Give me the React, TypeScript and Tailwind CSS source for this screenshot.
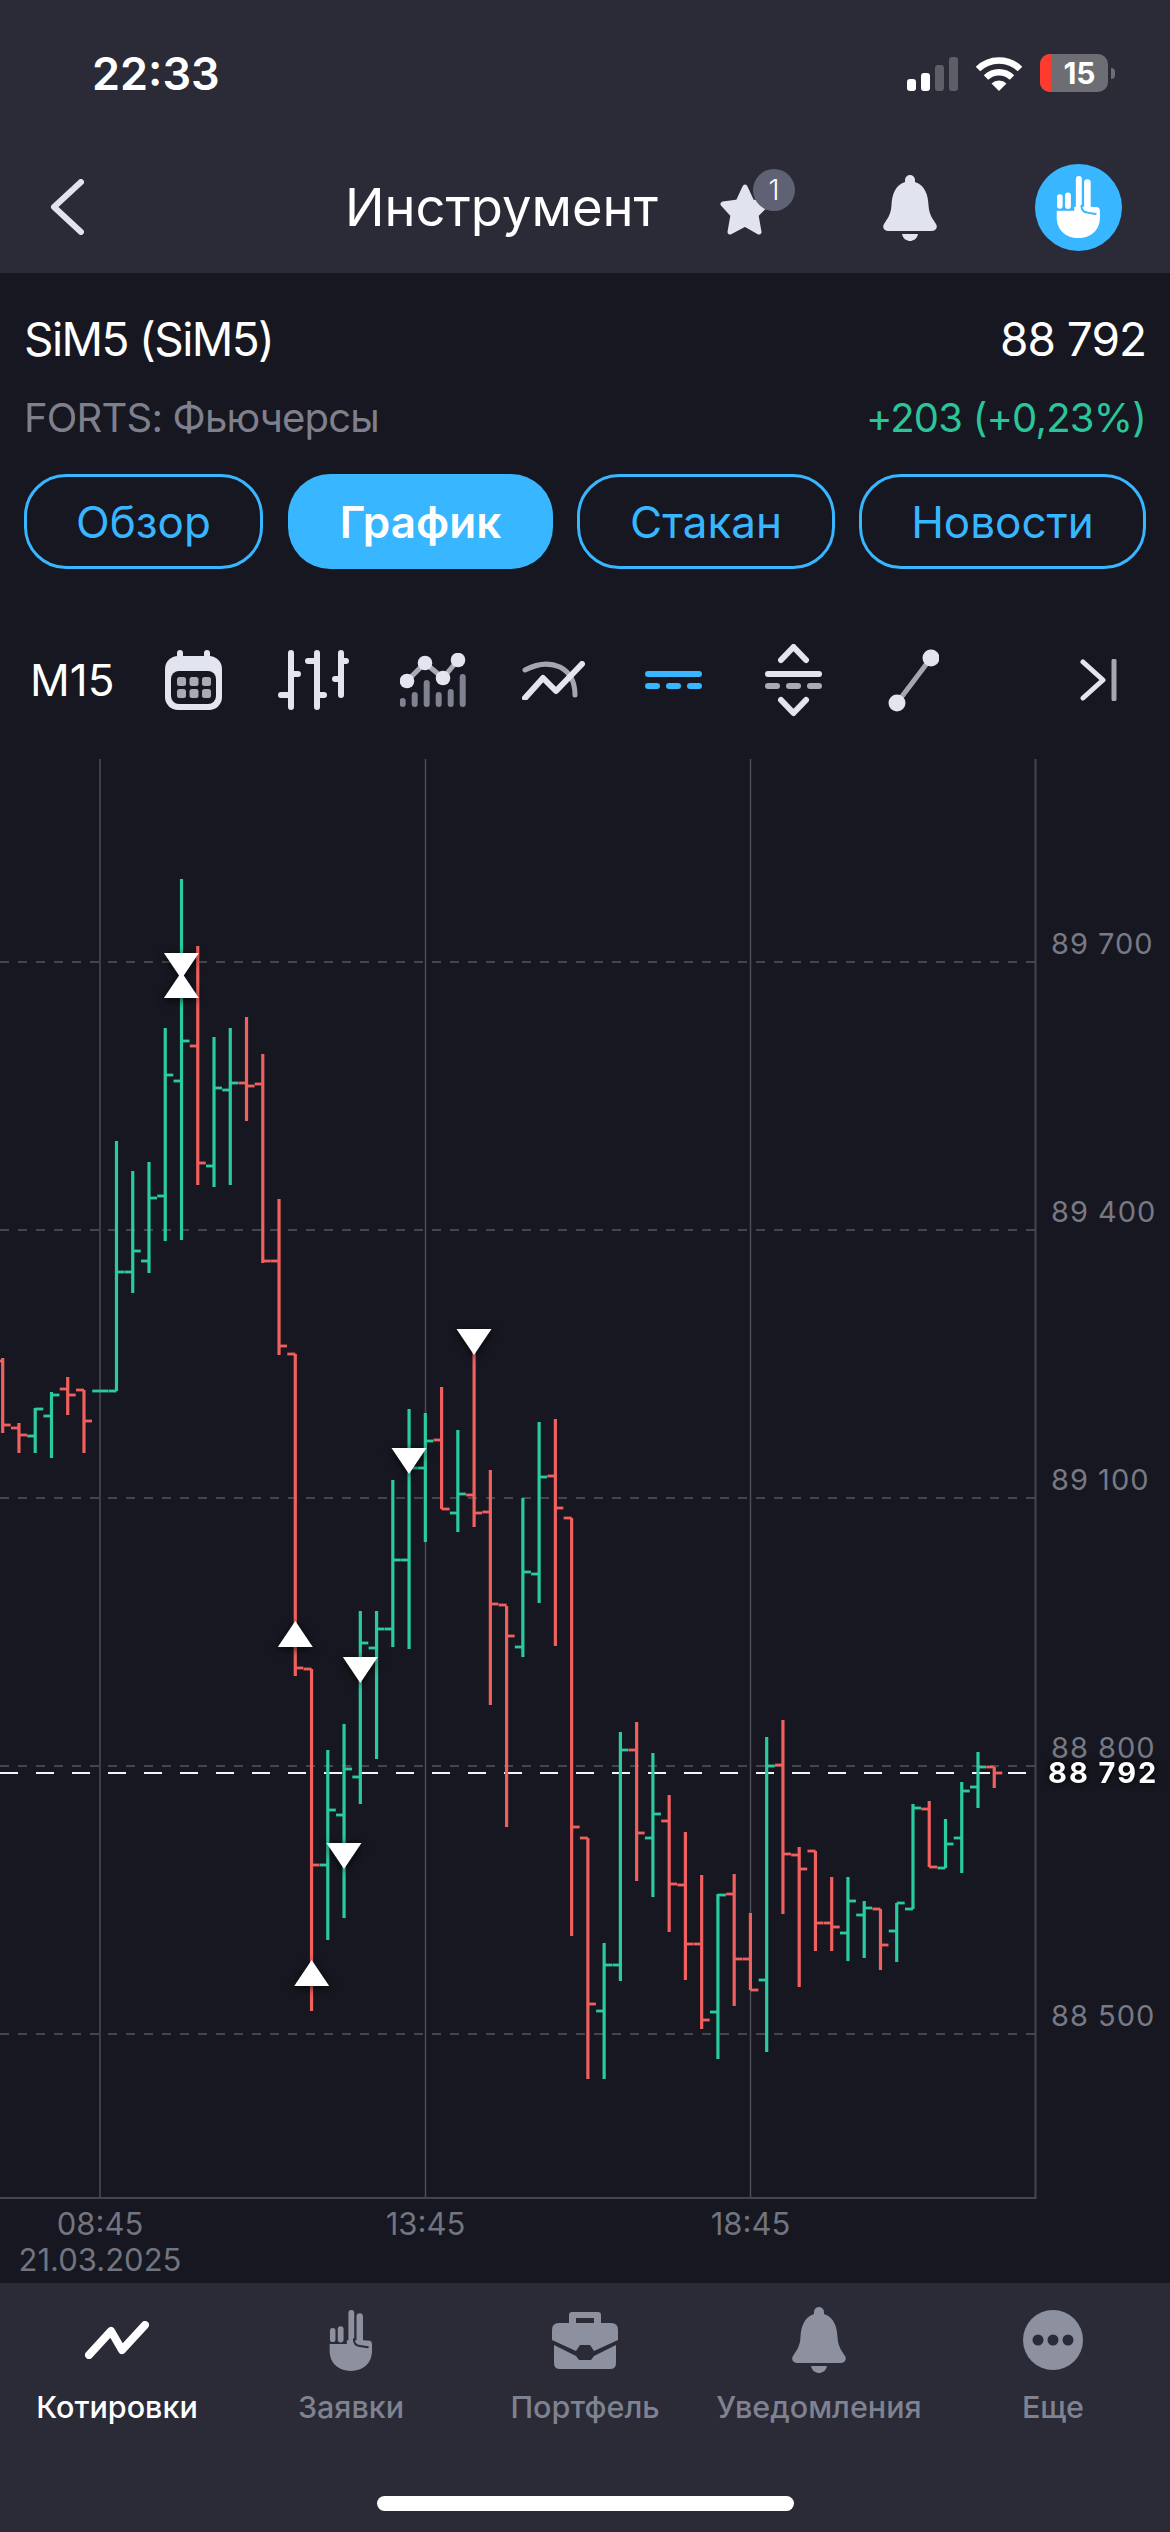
const BARS: [number, number, number, number][] = [
  // high, low, open, close in page pixels
  [1358, 1433, 1361, 1425], [1423, 1453, 1428, 1435], [1408, 1453, 1436, 1409], [1392, 1458, 1416, 1395],
  [1377, 1415, 1389, 1395], [1390, 1453, 1390, 1421], [1391, 1391, 1391, 1391], [1141, 1391, 1391, 1272],
  [1171, 1293, 1272, 1251], [1162, 1273, 1261, 1198], [1028, 1241, 1196, 1075], [879, 1240, 1081, 1041],
  [946, 1185, 1046, 1163], [1037, 1187, 1166, 1088], [1028, 1185, 1090, 1083], [1017, 1121, 1083, 1086],
  [1054, 1263, 1084, 1261], [1199, 1355, 1261, 1346], [1354, 1676, 1354, 1668], [1669, 2011, 1669, 1865],
  [1750, 1940, 1865, 1810], [1724, 1918, 1815, 1769], [1611, 1804, 1777, 1643], [1611, 1759, 1648, 1629],
  [1480, 1647, 1629, 1560], [1409, 1649, 1560, 1468], [1413, 1542, 1468, 1441], [1387, 1509, 1440, 1509],
  [1430, 1532, 1513, 1494], [1329, 1527, 1495, 1513], [1470, 1705, 1512, 1604], [1606, 1827, 1605, 1636],
  [1498, 1657, 1647, 1572], [1422, 1603, 1574, 1477], [1419, 1646, 1476, 1508], [1518, 1936, 1518, 1827],
  [1838, 2079, 1838, 2004], [1943, 2079, 2011, 1965], [1732, 1981, 1965, 1750], [1722, 1881, 1750, 1833],
  [1753, 1897, 1838, 1814], [1795, 1932, 1821, 1884], [1832, 1980, 1885, 1944], [1875, 2029, 1944, 2020],
  [1894, 2059, 2012, 1895], [1874, 2006, 1894, 1959], [1913, 1990, 1959, 1990], [1737, 2052, 1980, 1766],
  [1720, 1914, 1765, 1854], [1847, 1987, 1855, 1869], [1851, 1951, 1851, 1923], [1877, 1951, 1923, 1927],
  [1877, 1961, 1933, 1901], [1901, 1958, 1915, 1908], [1909, 1970, 1909, 1945], [1903, 1962, 1931, 1903],
  [1804, 1909, 1909, 1808], [1801, 1867, 1809, 1867], [1819, 1868, 1868, 1844], [1782, 1873, 1838, 1791],
  [1752, 1808, 1787, 1767], [1767, 1788, 1767, 1773],
];

const GRID = [
  { y: 962, label: "89 700" },
  { y: 1230, label: "89 400" },
  { y: 1498, label: "89 100" },
  { y: 1766, label: "88 800" },
  { y: 2034, label: "88 500" },
];

const TIMES = [
  { x: 100, label: "08:45" },
  { x: 425.5, label: "13:45" },
  { x: 750.5, label: "18:45" },
];

const DOWN_MARKS = [
  { x: 181.4, y: 953 },
  { x: 360.3, y: 1657 },
  { x: 344, y: 1843 },
  { x: 409, y: 1448 },
  { x: 474, y: 1329 },
];

const UP_MARKS = [
  { x: 181.4, y: 972 },
  { x: 295.3, y: 1621 },
  { x: 311.7, y: 1960 },
];

function Chart() {
  return (
    <svg width="1170" height="1543" viewBox="0 740 1170 1543" className="block [font-family:Inter,sans-serif]">
      {TIMES.map((t) => (
        <line key={t.x} x1={t.x} x2={t.x} y1="759" y2="2198" stroke="#4c4d56" strokeWidth="1.5" />
      ))}
      {GRID.map((g) => (
        <line key={g.y} x1="0" x2="1035" y1={g.y} y2={g.y} stroke="#55565e" strokeWidth="1.5" strokeDasharray="9 9" />
      ))}
      <line x1="1035.5" x2="1035.5" y1="759" y2="2199" stroke="#44454e" strokeWidth="2" />
      <line x1="0" x2="1036" y1="2198" y2="2198" stroke="#44454e" strokeWidth="2" />
      <line x1="0" x2="1026" y1="1773" y2="1773" stroke="#f4f4f6" strokeWidth="2" strokeDasharray="18 18" />

      {BARS.map(([high, low, open, close], i) => {
        const x = 2.7 + i * 16.255;
        const color = close <= open ? "#2bcba0" : "#f0605f";
        return (
          <g key={i} stroke={color} strokeWidth="3.2">
            <line x1={x} x2={x} y1={high} y2={low} />
            <line x1={x - 8} x2={x} y1={open} y2={open} strokeWidth="2.8" />
            <line x1={x} x2={x + 8} y1={close} y2={close} strokeWidth="2.8" />
          </g>
        );
      })}

      <g fill="#ffffff" className="drop-shadow-[0_2px_4px_rgba(0,0,0,0.7)]">
        {DOWN_MARKS.map((m) => (
          <polygon key={m.y} points={`${m.x - 17.5},${m.y} ${m.x + 17.5},${m.y} ${m.x},${m.y + 26}`} />
        ))}
        {UP_MARKS.map((m) => (
          <polygon key={m.y} points={`${m.x - 17.5},${m.y + 26} ${m.x + 17.5},${m.y + 26} ${m.x},${m.y}`} />
        ))}
      </g>

      {GRID.map((g) => (
        <text key={g.y} x="1051" y={g.y - 8} fontSize="29" letterSpacing="1" fill="#777985">
          {g.label}
        </text>
      ))}
      <text
        x="1048"
        y="1783"
        fontSize="29"
        fontWeight="700"
        letterSpacing="2"
        fill="#ffffff"
        className="drop-shadow-[0_0_3px_rgba(0,0,0,0.9)]"
      >
        88 792
      </text>

      {TIMES.map((t) => (
        <text key={t.x} x={t.x} y="2235" fontSize="31" textAnchor="middle" fill="#72747f">
          {t.label}
        </text>
      ))}
      <text x="100" y="2271" fontSize="31" textAnchor="middle" fill="#72747f">
        21.03.2025
      </text>
    </svg>
  );
}

function HandIcon({ color, gap, className }: { color: string; gap: string; className: string }) {
  return (
    <svg viewBox="1095 72 136 194" className={className}>
      <g fill={color}>
        <rect x="1155" y="75" width="18" height="110" rx="9" />
        <rect x="1180" y="85" width="20" height="95" rx="10" />
        <rect x="1098" y="130" width="17" height="44" rx="8" />
        <rect x="1122" y="125" width="18" height="50" rx="9" />
        <path d="M1097 180 H1150 V168 H1200 L1222 170 Q1228 172 1228 182 V200 C1228 240 1200 263 1163 263 C1125 263 1097 240 1097 200 Z" />
      </g>
      <path d="M1172 165 Q1172 184 1190 186 L1215 190" fill="none" stroke={gap} strokeWidth="6" strokeLinecap="round" />
    </svg>
  );
}

function BellIcon({ color, className }: { color: string; className: string }) {
  return (
    <svg viewBox="-1 0 56 66" className={className} fill={color}>
      <path d="M27 0 a5 5 0 0 1 5 5 v2 C42 10 45 20 45.5 30 C46 40 50 44 53 49 C55 52 53 56 49 56 H5 C1 56 -1 52 1 49 C4 44 8 40 8.5 30 C9 20 12 10 22 7 V5 a5 5 0 0 1 5 -5 Z" />
      <path d="M19 59 H35 C34 64 30 66 27 66 C24 66 20 64 19 59 Z" />
    </svg>
  );
}

function StatusBar() {
  return (
    <div className="flex h-[146px] items-center justify-between pl-[92px] pr-[55px]">
      <span className="text-[45px] font-semibold leading-none text-white">22:33</span>
      <div className="flex items-center">
        <svg width="51" height="34" viewBox="0 0 51 34" className="mt-[1px]">
          <rect x="0" y="22" width="9" height="12" rx="3" fill="#fff" />
          <rect x="14" y="16" width="9" height="18" rx="3" fill="#fff" />
          <rect x="28" y="8" width="9" height="26" rx="3" fill="#5d5e67" />
          <rect x="42" y="0" width="9" height="34" rx="3" fill="#5d5e67" />
        </svg>
        <svg width="48" height="36" viewBox="0 0 48 36" className="ml-[17px] mr-[17px]">
          <g fill="none" stroke="#fff" strokeWidth="6.5">
            <path d="M3 14 A30 30 0 0 1 45 14" />
            <path d="M11 22.5 A19 19 0 0 1 37 22.5" />
          </g>
          <path d="M24 36 L16.5 28.5 A11 11 0 0 1 31.5 28.5 Z" fill="#fff" />
        </svg>
        <div className="relative flex h-[38px] w-[68px] items-center overflow-hidden rounded-[10px] bg-[#6d6d74]">
          <div className="h-full w-[11px] bg-[#ff3b30]" />
          <span className="flex-1 text-center text-[30px] font-bold leading-none text-white">15</span>
        </div>
        <div className="ml-[3px] h-[11px] w-[4px] rounded-r-full bg-[#6d6d74]" />
      </div>
    </div>
  );
}

function NavBar() {
  return (
    <div className="flex h-[122px] items-center">
      <svg width="34" height="56" viewBox="0 0 34 56" className="ml-[50px]" fill="none" stroke="#e1e3ee" strokeWidth="6" strokeLinecap="round" strokeLinejoin="round">
        <polyline points="31,3 4,28 31,53" />
      </svg>
      <span className="ml-[261px] w-[315px] whitespace-nowrap text-[52.5px] font-normal leading-none text-white">Инструмент</span>
      <div className="relative ml-[60px] h-[60px] w-[48px]">
        <svg width="50" height="54" viewBox="0 0 50 54" className="absolute left-0 top-[6px]" fill="#e1e3ee" stroke="#e1e3ee" strokeWidth="5" strokeLinejoin="round">
          <polygon points="25,4 32,19 47,21 36,32 39,49 25,41 10,49 13,32 3,21 18,19" />
        </svg>
        <div className="absolute left-[33px] top-[-8px] flex h-[42px] w-[42px] items-center justify-center rounded-full bg-[#5f6275] text-[28px] font-light leading-none text-white">
          1
        </div>
      </div>
      <BellIcon color="#e1e3ee" className="ml-[114px] mt-[1px] h-[66px] w-[56px]" />
      <div className="ml-[97px] flex h-[87px] w-[87px] items-center justify-center rounded-full bg-[#38b6ff]">
        <HandIcon color="#ffffff" gap="#38b6ff" className="h-[64px] w-[45px]" />
      </div>
    </div>
  );
}

function Info() {
  return (
    <div className="pl-[24px] pr-[24px]">
      <div className="mt-[36px] flex h-[60px] items-center justify-between text-[46px] leading-none text-white">
        <span className="tracking-[-1.6px]">SiM5 (SiM5)</span>
        <span className="tracking-[-1px]">88 792</span>
      </div>
      <div className="mt-[19px] flex h-[60px] items-center justify-between text-[40px] leading-none">
        <span className="tracking-[-0.8px] text-[#7f808c]">FORTS: Фьючерсы</span>
        <span className="tracking-[-0.8px] text-[#2bc59b]">+203 (+0,23%)</span>
      </div>
      <div className="mt-[26px] flex h-[95px] gap-[24px] text-[44px] leading-none text-[#38b6ff]">
        <div className="flex w-[239px] items-center justify-center rounded-[42px] border-[3px] border-[#38b6ff]">Обзор</div>
        <div className="ml-[1px] flex w-[265px] items-center justify-center rounded-[42px] bg-[#38b6ff] font-semibold text-white">График</div>
        <div className="flex w-[258px] items-center justify-center rounded-[42px] border-[3px] border-[#38b6ff]">Стакан</div>
        <div className="flex w-[287px] items-center justify-center rounded-[42px] border-[3px] border-[#38b6ff]">Новости</div>
      </div>
    </div>
  );
}

function ToolCell({ children }: { children: React.ReactNode }) {
  return <div className="flex w-[120px] items-center justify-center">{children}</div>;
}

function Toolbar() {
  const light = "#e2e4ef";
  const grey = "#a8aab4";
  const dark = "#161720";
  return (
    <div className="mt-[51px] flex h-[120px] items-center pl-[30px] pr-[53px]">
      <span className="w-[103px] text-[44px] leading-none text-white">M15</span>
      <ToolCell>
        <svg width="57" height="60" viewBox="0 0 57 60">
          <rect x="12" y="0" width="6" height="12" rx="3" fill={light} />
          <rect x="39" y="0" width="6" height="12" rx="3" fill={light} />
          <rect x="0" y="6" width="57" height="54" rx="13" fill={light} />
          <rect x="6" y="21" width="45" height="33" rx="8" fill={dark} />
          {[12, 24.5, 37].map((x) =>
            [27, 39].map((y) => <rect key={`${x}-${y}`} x={x} y={y} width="9" height="9" rx="2.5" fill={grey} />),
          )}
        </svg>
      </ToolCell>
      <ToolCell>
        <svg width="71" height="60" viewBox="0 0 71 60" fill="none" stroke={light} strokeWidth="6" strokeLinecap="round">
          <path d="M13 3 V57 M13 24 H20 M3 45 H13" />
          <path d="M39 3 V57 M30 11 H39 M39 45 H46" />
          <path d="M63 3 V45 M63 11 H68 M57 29 H63" />
        </svg>
      </ToolCell>
      <ToolCell>
        <svg width="66" height="54" viewBox="0 0 66 54">
          {[
            [2.7, 45],
            [14.7, 39],
            [26.7, 27],
            [38.7, 39],
            [50.7, 36],
            [62.7, 21],
          ].map(([x, y]) => (
            <line key={x} x1={x} x2={x} y1={y + 3} y2="51" stroke="#7f8290" strokeWidth="6" strokeLinecap="round" />
          ))}
          <polyline points="7,28 25,10 43,25 58,7" fill="none" stroke={grey} strokeWidth="5" />
          <g fill={light}>
            <circle cx="7" cy="28" r="7.3" />
            <circle cx="25" cy="10" r="7.3" />
            <circle cx="43" cy="25" r="7.3" />
            <circle cx="58" cy="7" r="7.3" />
          </g>
        </svg>
      </ToolCell>
      <ToolCell>
        <svg width="63" height="39" viewBox="0 0 63 39" fill="none" strokeLinecap="round" strokeLinejoin="round">
          <path d="M3 9 Q22 -1 38 6 Q53 14 53 34" stroke="#a5a7ae" strokeWidth="5" />
          <polyline points="3,37 21,17 34,30 60,3" stroke={light} strokeWidth="6" />
        </svg>
      </ToolCell>
      <ToolCell>
        <svg width="57" height="18" viewBox="0 0 57 18" fill="#38b6ff">
          <rect x="0" y="0" width="57" height="6" rx="3" />
          <rect x="0" y="12" width="15" height="6" rx="3" />
          <rect x="21" y="12" width="15" height="6" rx="3" />
          <rect x="42" y="12" width="15" height="6" rx="3" />
        </svg>
      </ToolCell>
      <ToolCell>
        <svg width="57" height="73" viewBox="0 0 57 73" fill="none" strokeLinecap="round" strokeLinejoin="round">
          <polyline points="16,16 28.5,3 41,16" stroke={light} strokeWidth="6" />
          <rect x="0" y="27" width="57" height="6" rx="3" fill={light} />
          <rect x="0" y="39" width="15" height="6" rx="3" fill={grey} />
          <rect x="21" y="39" width="15" height="6" rx="3" fill={grey} />
          <rect x="42" y="39" width="15" height="6" rx="3" fill={grey} />
          <polyline points="16,56 28.5,69 41,56" stroke={light} strokeWidth="6" />
        </svg>
      </ToolCell>
      <ToolCell>
        <svg width="51" height="63" viewBox="0 0 51 63">
          <line x1="9" y1="54" x2="43" y2="9" stroke="#a5a7ae" strokeWidth="5" />
          <circle cx="9" cy="54" r="8.5" fill={light} />
          <circle cx="43" cy="9" r="8.5" fill={light} />
        </svg>
      </ToolCell>
      <svg width="37" height="42" viewBox="0 0 37 42" className="ml-auto" fill="none" strokeLinecap="round" strokeLinejoin="round">
        <polyline points="3,3 23,21 3,39" stroke={light} strokeWidth="5" />
        <line x1="34" y1="2" x2="34" y2="40" stroke="#a5a7ae" strokeWidth="5" />
      </svg>
    </div>
  );
}

function TabBar() {
  const grey = "#8d909e";
  const bg = "#2b2b37";
  const tabs = [
    {
      label: "Котировки",
      active: true,
      icon: (
        <svg width="64" height="38" viewBox="0 0 64 38" fill="none" stroke="#ffffff" strokeWidth="8" strokeLinecap="round" strokeLinejoin="round">
          <polyline points="4,34 26,10 37,29 60,4" />
        </svg>
      ),
    },
    { label: "Заявки", icon: <HandIcon color={grey} gap={bg} className="h-[63px] w-[44px]" /> },
    {
      label: "Портфель",
      icon: (
        <svg width="66" height="57" viewBox="0 0 66 57" fill={grey}>
          <path fillRule="evenodd" d="M20 0 H46 a3 3 0 0 1 3 3 V12 H42 V6 H24 V12 H17 V3 a3 3 0 0 1 3 -3 Z" />
          <path d="M7 11 H59 Q66 11 66 18 V28 L42 39 L38 33 H28 L24 39 L0 28 V18 Q0 11 7 11 Z" />
          <path d="M2 33 L24 44 L27 48 H39 L42 44 L64 33 V51 Q64 57 58 57 H8 Q2 57 2 51 Z" />
        </svg>
      ),
    },
    { label: "Уведомления", icon: <BellIcon color={grey} className="h-[66px] w-[56px]" /> },
    {
      label: "Еще",
      icon: (
        <svg width="60" height="60" viewBox="0 0 60 60">
          <circle cx="30" cy="30" r="30" fill={grey} />
          <circle cx="15" cy="30" r="5.5" fill={bg} />
          <circle cx="30" cy="30" r="5.5" fill={bg} />
          <circle cx="45" cy="30" r="5.5" fill={bg} />
        </svg>
      ),
    },
  ];
  return (
    <div className="flex flex-1 flex-col bg-[#2b2b37]">
      <div className="grid grid-cols-5 pt-[24px]">
        {tabs.map((t) => (
          <div key={t.label} className="flex flex-col items-center">
            <div className="flex h-[66px] items-center">{t.icon}</div>
            <span className={`mt-[19px] text-[30.5px] font-medium leading-none ${t.active ? "text-white" : "text-[#7f8290]"}`}>
              {t.label}
            </span>
          </div>
        ))}
      </div>
      <div className="mx-auto mt-[73px] h-[15px] w-[417px] rounded-full bg-white" />
    </div>
  );
}

export default function App() {
  return (
    <div className="flex h-[2532px] w-[1170px] flex-col overflow-hidden bg-[#161720] [font-family:Inter,sans-serif]">
      <div className="h-[273px] bg-[#2b2b37]">
        <StatusBar />
        <NavBar />
      </div>
      <Info />
      <Toolbar />
      <Chart />
      <TabBar />
    </div>
  );
}
